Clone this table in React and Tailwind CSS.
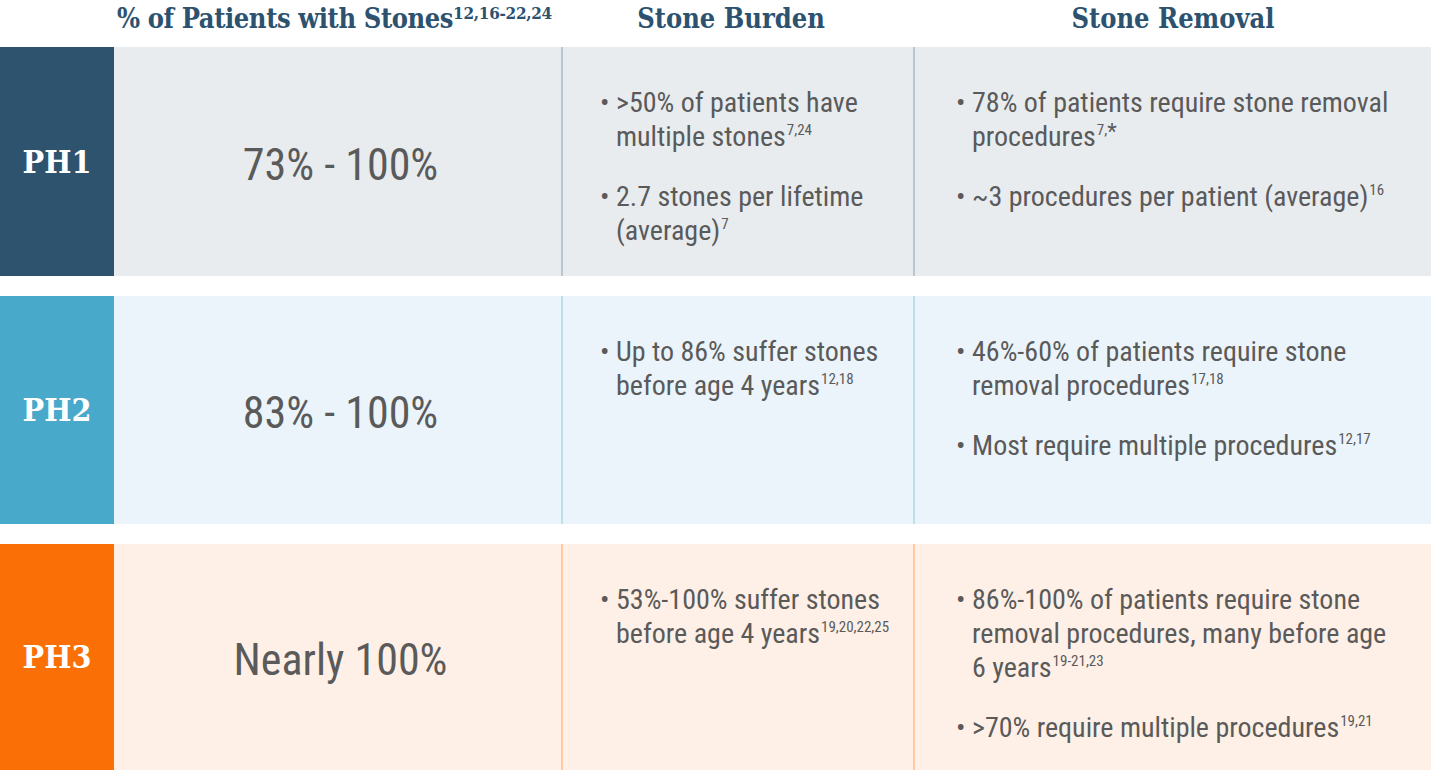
const body = { fontFamily: 'Roboto, "Noto Sans", sans-serif', fontStretch: 'condensed' };
const serif = { fontFamily: '"DejaVu Serif Condensed", "DejaVu Serif", serif' };

const rows = [
  {
    label: 'PH1',
    pct: '73% - 100%',
    tag: 'bg-[#2e536e]',
    bg: 'bg-[#e8ecef]',
    line: 'border-[#b9c5d0]',
    h: 'h-[229px]',
    burden: [
      ['>50% of patients have multiple stones', '7,24'],
      ['2.7 stones per lifetime (average)', '7'],
    ],
    removal: [
      ['78% of patients require stone removal procedures', '7,', true],
      ['~3 procedures per patient (average)', '16'],
    ],
  },
  {
    label: 'PH2',
    pct: '83% - 100%',
    tag: 'bg-[#48a9cb]',
    bg: 'bg-[#ebf4fa]',
    line: 'border-[#bde0ec]',
    h: 'h-[228px]',
    burden: [['Up to 86% suffer stones before age 4 years', '12,18']],
    removal: [
      ['46%-60% of patients require stone removal procedures', '17,18'],
      ['Most require multiple procedures', '12,17'],
    ],
  },
  {
    label: 'PH3',
    pct: 'Nearly 100%',
    tag: 'bg-[#fb6f07]',
    bg: 'bg-[#fef0e6]',
    line: 'border-[#fccba5]',
    h: 'h-[226px]',
    burden: [['53%-100% suffer stones before age 4 years', '19,20,22,25']],
    removal: [
      ['86%-100% of patients require stone removal procedures, many before age 6 years', '19-21,23'],
      ['>70% require multiple procedures', '19,21'],
    ],
  },
];

function Bullets({ items }) {
  return (
    <ul className="flex flex-col gap-[26px]">
      {items.map(([text, refs, star]) => (
        <li key={text} className="flex text-[28px] leading-[34px] text-[#5a5a5a]">
          <span className="w-[16px] shrink-0">•</span>
          <span>
            {text}
            <sup className="text-[15px] leading-none -top-[11px] ml-[1px]">
              {refs}
              {star && <span className="text-[22px] relative top-[4px]">*</span>}
            </sup>
          </span>
        </li>
      ))}
    </ul>
  );
}

export default function App() {
  return (
    <div className="w-[1431px] h-[773px] bg-white flex flex-col" style={body}>
      {/* header */}
      <div className="h-[47px] flex items-center pb-[8px] text-[#2d5270] font-bold text-[27px] whitespace-nowrap" style={serif}>
        <div className="w-[114px]" />
        <div className="w-[447px] text-center tracking-[-0.4px] pr-[6px]">
          % of Patients with Stones
          <sup className="text-[17px] leading-none -top-[9px] tracking-[-0.3px]">12,16-22,24</sup>
        </div>
        <div className="w-[354px] text-center pr-[14px]">Stone Burden</div>
        <div className="flex-1 text-center">Stone Removal</div>
      </div>

      <div className="flex flex-col gap-[20px]">
        {rows.map((r) => (
          <div key={r.label} className={`${r.h} flex ${r.bg}`}>
            <div
              className={`w-[114px] ${r.tag} flex items-center justify-center text-white font-bold text-[32px]`}
              style={serif}
            >
              {r.label}
            </div>
            <div className="w-[447px] flex items-center justify-center text-[44px] text-[#5a5a5a] pt-[6px] pl-[6px]">
              {r.pct}
            </div>
            <div className={`w-[354px] border-l-2 border-r-2 ${r.line} pt-[39px] pl-[37px] pr-[16px]`}>
              <Bullets items={r.burden} />
            </div>
            <div className="flex-1 pt-[39px] pl-[41px] pr-[28px]">
              <Bullets items={r.removal} />
            </div>
          </div>
        ))}
      </div>
    </div>
  );
}
